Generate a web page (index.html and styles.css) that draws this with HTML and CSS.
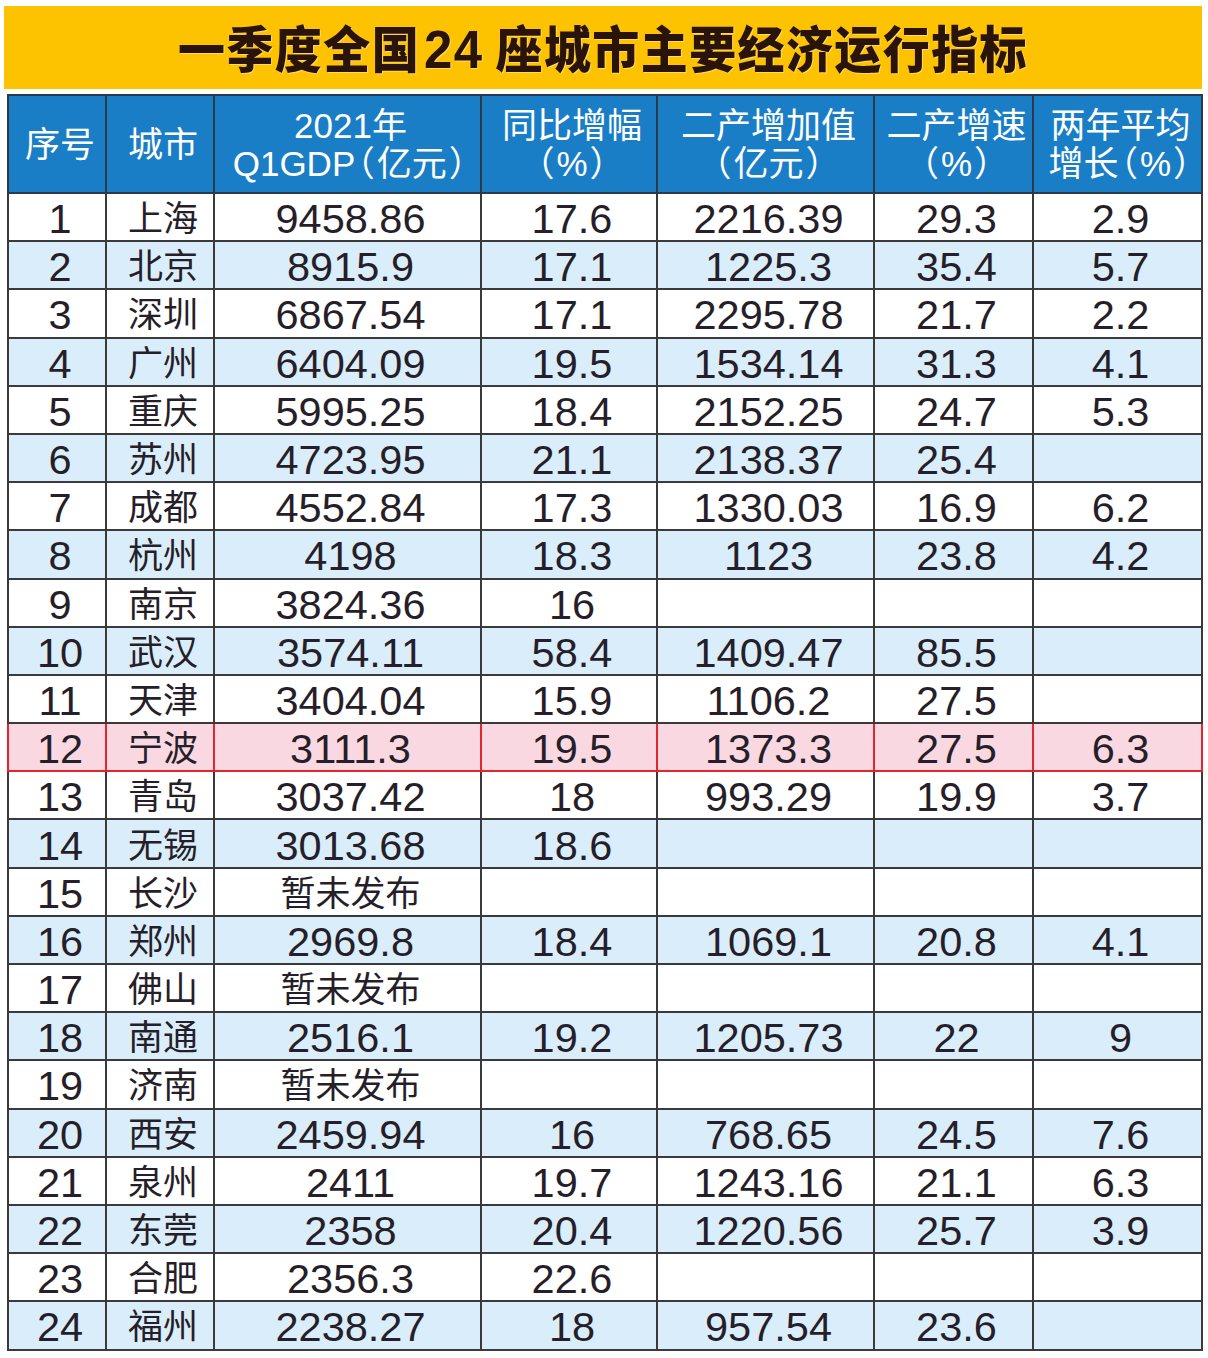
FILE: index.html
```html
<!DOCTYPE html>
<html lang="zh-CN">
<head>
<meta charset="utf-8">
<title>一季度全国24座城市主要经济运行指标</title>
<link rel="stylesheet" href="styles.css">
</head>
<body>
<div class="banner"><h1 class="title">一季度全国<span class="num">24</span>座城市主要经济运行指标</h1></div>
<table class="data">
<colgroup>
<col class="c1"><col class="c2"><col class="c3"><col class="c4"><col class="c5"><col class="c6"><col class="c7">
</colgroup>
<thead>
<tr>
<th>序号</th><th>城市</th><th>2021年<br>Q1GDP<span class="fp">（</span>亿元<span class="fp">）</span></th><th>同比增幅<br><span class="fp">（</span>%<span class="fp">）</span></th><th>二产增加值<br><span class="fp">（</span>亿元<span class="fp">）</span></th><th>二产增速<br><span class="fp">（</span>%<span class="fp">）</span></th><th>两年平均<br>增长<span class="fp">（</span>%<span class="fp">）</span></th>
</tr>
</thead>
<tbody>
<tr><td>1</td><td class="cn">上海</td><td>9458.86</td><td>17.6</td><td>2216.39</td><td>29.3</td><td>2.9</td></tr>
<tr class="alt"><td>2</td><td class="cn">北京</td><td>8915.9</td><td>17.1</td><td>1225.3</td><td>35.4</td><td>5.7</td></tr>
<tr><td>3</td><td class="cn">深圳</td><td>6867.54</td><td>17.1</td><td>2295.78</td><td>21.7</td><td>2.2</td></tr>
<tr class="alt"><td>4</td><td class="cn">广州</td><td>6404.09</td><td>19.5</td><td>1534.14</td><td>31.3</td><td>4.1</td></tr>
<tr><td>5</td><td class="cn">重庆</td><td>5995.25</td><td>18.4</td><td>2152.25</td><td>24.7</td><td>5.3</td></tr>
<tr class="alt"><td>6</td><td class="cn">苏州</td><td>4723.95</td><td>21.1</td><td>2138.37</td><td>25.4</td><td></td></tr>
<tr><td>7</td><td class="cn">成都</td><td>4552.84</td><td>17.3</td><td>1330.03</td><td>16.9</td><td>6.2</td></tr>
<tr class="alt"><td>8</td><td class="cn">杭州</td><td>4198</td><td>18.3</td><td>1123</td><td>23.8</td><td>4.2</td></tr>
<tr><td>9</td><td class="cn">南京</td><td>3824.36</td><td>16</td><td></td><td></td><td></td></tr>
<tr class="alt"><td>10</td><td class="cn">武汉</td><td>3574.11</td><td>58.4</td><td>1409.47</td><td>85.5</td><td></td></tr>
<tr><td>11</td><td class="cn">天津</td><td>3404.04</td><td>15.9</td><td>1106.2</td><td>27.5</td><td></td></tr>
<tr class="hl"><td>12</td><td class="cn">宁波</td><td>3111.3</td><td>19.5</td><td>1373.3</td><td>27.5</td><td>6.3</td></tr>
<tr><td>13</td><td class="cn">青岛</td><td>3037.42</td><td>18</td><td>993.29</td><td>19.9</td><td>3.7</td></tr>
<tr class="alt"><td>14</td><td class="cn">无锡</td><td>3013.68</td><td>18.6</td><td></td><td></td><td></td></tr>
<tr><td>15</td><td class="cn">长沙</td><td class="cn">暂未发布</td><td></td><td></td><td></td><td></td></tr>
<tr class="alt"><td>16</td><td class="cn">郑州</td><td>2969.8</td><td>18.4</td><td>1069.1</td><td>20.8</td><td>4.1</td></tr>
<tr><td>17</td><td class="cn">佛山</td><td class="cn">暂未发布</td><td></td><td></td><td></td><td></td></tr>
<tr class="alt"><td>18</td><td class="cn">南通</td><td>2516.1</td><td>19.2</td><td>1205.73</td><td>22</td><td>9</td></tr>
<tr><td>19</td><td class="cn">济南</td><td class="cn">暂未发布</td><td></td><td></td><td></td><td></td></tr>
<tr class="alt"><td>20</td><td class="cn">西安</td><td>2459.94</td><td>16</td><td>768.65</td><td>24.5</td><td>7.6</td></tr>
<tr><td>21</td><td class="cn">泉州</td><td>2411</td><td>19.7</td><td>1243.16</td><td>21.1</td><td>6.3</td></tr>
<tr class="alt"><td>22</td><td class="cn">东莞</td><td>2358</td><td>20.4</td><td>1220.56</td><td>25.7</td><td>3.9</td></tr>
<tr><td>23</td><td class="cn">合肥</td><td>2356.3</td><td>22.6</td><td></td><td></td><td></td></tr>
<tr class="alt"><td>24</td><td class="cn">福州</td><td>2238.27</td><td>18</td><td>957.54</td><td>23.6</td><td></td></tr>
</tbody>
</table>
</body>
</html>
```
FILE: styles.css
```css
html, body {
  margin: 0;
  padding: 0;
  background: #ffffff;
}

body {
  width: 1208px;
  font-family: "Liberation Sans", "Noto Sans CJK SC", sans-serif;
}

.banner {
  margin: 6px 6px 0 4px;
  height: 83px;
  background: #fdc300;
  display: flex;
  align-items: center;
  justify-content: center;
}

.title {
  margin: 2px 0 0 0;
  font-family: "Noto Sans CJK SC", sans-serif;
  font-weight: 900;
  font-size: 47px;
  line-height: 1;
  color: #2a140a;
  letter-spacing: 1.4px;
  text-shadow: 1px 1px 0 rgba(255, 240, 200, 0.5);
  transform: scaleY(1.06);
}

.title .num {
  font-family: "Liberation Sans", sans-serif;
  font-weight: 700;
  font-size: 51px;
  margin: 0 12px 0 4px;
}

.data {
  margin: 5px 0 0 7px;
  border-collapse: collapse;
  table-layout: fixed;
  width: 1194px;
  border: 2px solid #3a3a3a;
}

.c1 { width: 98px; }
.c2 { width: 108px; }
.c3 { width: 267px; }
.c4 { width: 176px; }
.c5 { width: 217px; }
.c6 { width: 159px; }
.c7 { width: 169px; }

.data th {
  height: 96px;
  padding: 0 0 0 6px;
  background: #1a7ec6;
  color: #ffffff;
  font-family: "Liberation Sans", "Noto Sans CJK SC", sans-serif;
  font-weight: 400;
  font-size: 35px;
  line-height: 35px;
  text-align: center;
  vertical-align: middle;
  border: 2px solid #2b3a4a;
  white-space: nowrap;
}

.data th .fp {
  font-family: "Noto Sans CJK SC", sans-serif;
  font-feature-settings: "halt" 1;
  margin: 0 2px;
}

.data td {
  height: 43.2px;
  padding: 3px 0 0 6px;
  text-align: center;
  vertical-align: middle;
  font-size: 41.5px;
  line-height: 43px;
  color: #261e28;
  border: 2px solid #3a3a3a;
  white-space: nowrap;
  background: #ffffff;
}

.data td.cn {
  font-family: "Noto Sans CJK SC", sans-serif;
  font-size: 35px;
  line-height: 43px;
  padding: 0 0 3px 6px;
}

.data tr.alt td {
  background: #d9eefa;
}

.data tr.hl td {
  background: #f9d8e2;
  border: 2px solid #e3262b;
}
```
